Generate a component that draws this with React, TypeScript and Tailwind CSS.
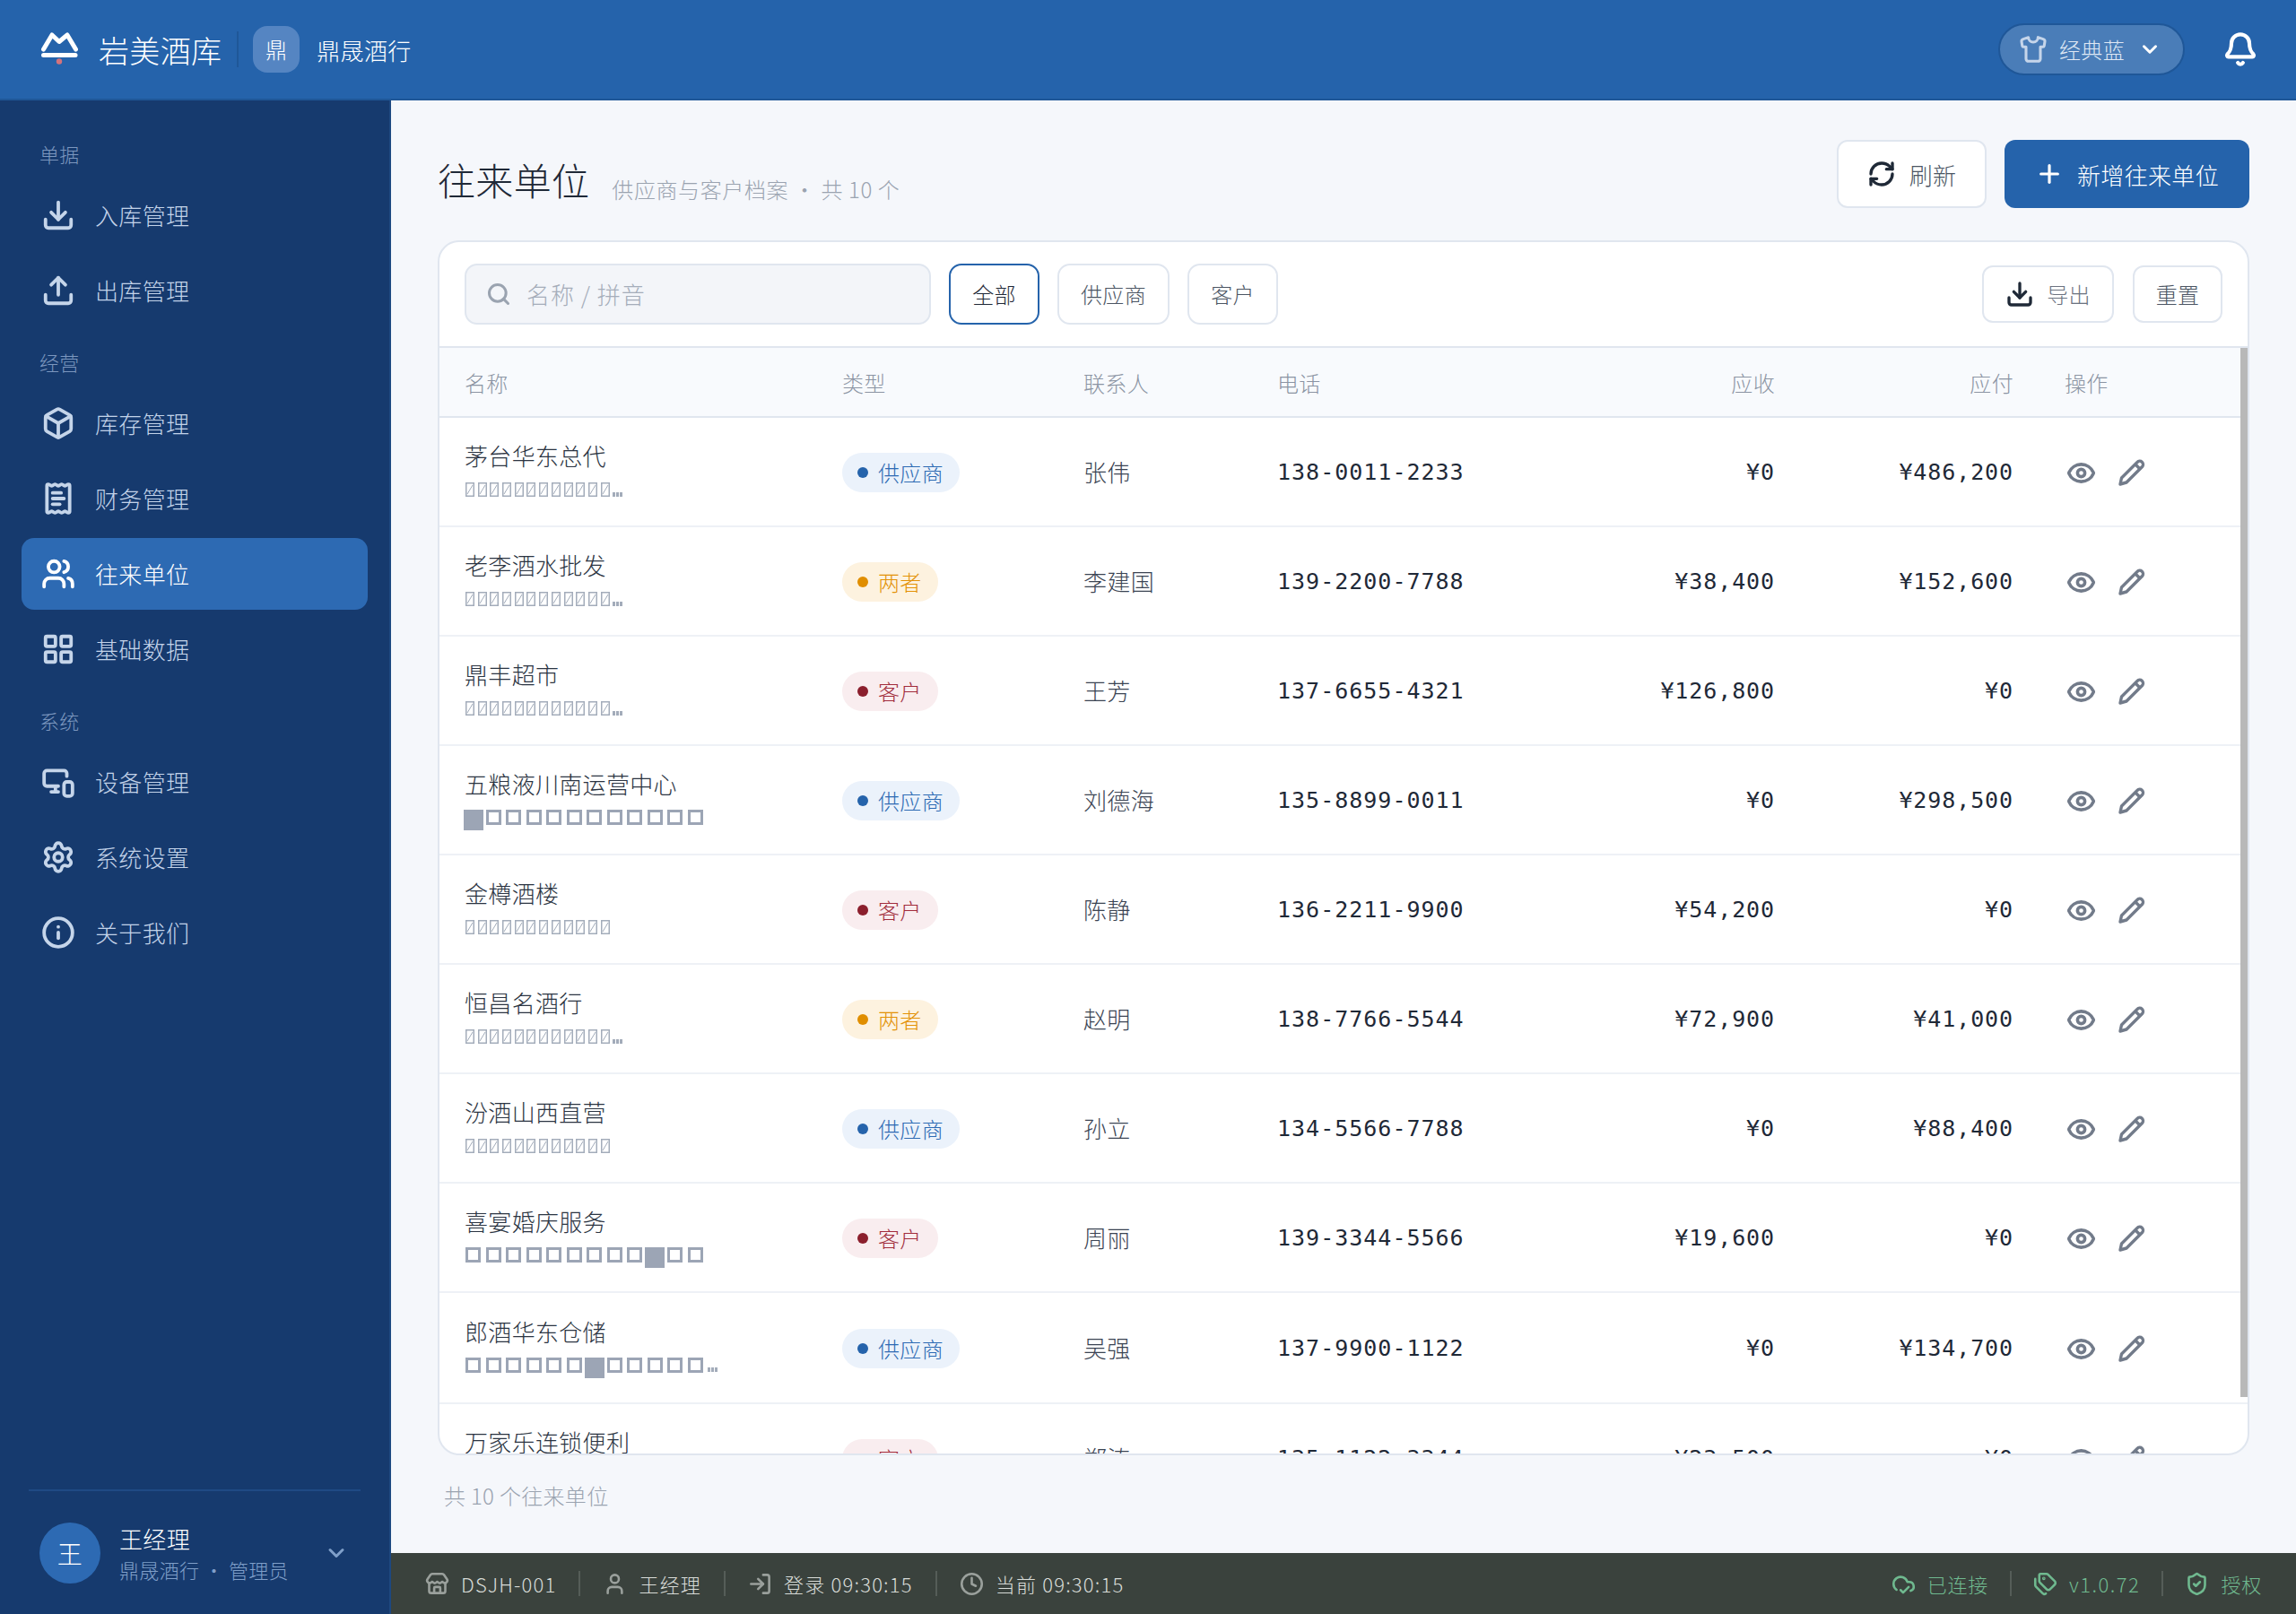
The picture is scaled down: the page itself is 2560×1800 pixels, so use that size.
import React from 'react';
import {
  Bell, Box, ChevronDown, Clock, CloudCheck, Download, Eye, Info, LayoutGrid, LogIn, MonitorSmartphone, Plus,
  ReceiptText, RefreshCw, Search, Settings, ShieldCheck, Shirt, Store, Tags, Upload, User, Users,
} from 'lucide-react';

type Kind = 'supplier' | 'customer' | 'both';
type Tofu = 'narrow' | 'narrowMore' | number[];

const navGroups = [
  {
    label: '单据',
    items: [
      { name: '入库管理', icon: Download },
      { name: '出库管理', icon: Upload },
    ],
  },
  {
    label: '经营',
    items: [
      { name: '库存管理', icon: Box },
      { name: '财务管理', icon: ReceiptText },
      { name: '往来单位', icon: Users, active: true },
      { name: '基础数据', icon: LayoutGrid },
    ],
  },
  {
    label: '系统',
    items: [
      { name: '设备管理', icon: MonitorSmartphone },
      { name: '系统设置', icon: Settings },
      { name: '关于我们', icon: Info },
    ],
  },
];

const partners: { name: string; tofu: Tofu; kind: Kind; contact: string; phone: string; ar: string; ap: string; tall?: boolean }[] = [
  { name: '茅台华东总代', tofu: 'narrowMore', kind: 'supplier', contact: '张伟', phone: '138-0011-2233', ar: '¥0', ap: '¥486,200' },
  { name: '老李酒水批发', tofu: 'narrowMore', kind: 'both', contact: '李建国', phone: '139-2200-7788', ar: '¥38,400', ap: '¥152,600' },
  { name: '鼎丰超市', tofu: 'narrowMore', kind: 'customer', contact: '王芳', phone: '137-6655-4321', ar: '¥126,800', ap: '¥0' },
  { name: '五粮液川南运营中心', tofu: [1, 0, 0, 0, 0, 0, 0, 0, 0, 0, 0, 0], kind: 'supplier', contact: '刘德海', phone: '135-8899-0011', ar: '¥0', ap: '¥298,500' },
  { name: '金樽酒楼', tofu: 'narrow', kind: 'customer', contact: '陈静', phone: '136-2211-9900', ar: '¥54,200', ap: '¥0' },
  { name: '恒昌名酒行', tofu: 'narrowMore', kind: 'both', contact: '赵明', phone: '138-7766-5544', ar: '¥72,900', ap: '¥41,000' },
  { name: '汾酒山西直营', tofu: 'narrow', kind: 'supplier', contact: '孙立', phone: '134-5566-7788', ar: '¥0', ap: '¥88,400' },
  { name: '喜宴婚庆服务', tofu: [0, 0, 0, 0, 0, 0, 0, 0, 0, 1, 0, 0], kind: 'customer', contact: '周丽', phone: '139-3344-5566', ar: '¥19,600', ap: '¥0' },
  { name: '郎酒华东仓储', tofu: [0, 0, 0, 0, 0, 0, 1, 0, 0, 0, 0, 0, 2], kind: 'supplier', contact: '吴强', phone: '137-9900-1122', ar: '¥0', ap: '¥134,700', tall: true },
  { name: '万家乐连锁便利', tofu: 'narrow', kind: 'customer', contact: '郑涛', phone: '135-1122-3344', ar: '¥23,500', ap: '¥0' },
];

const kindStyles: Record<Kind, { label: string; pill: string; dot: string }> = {
  supplier: { label: '供应商', pill: 'bg-[#ebf2fb] text-[#2d6ab3]', dot: 'bg-[#2563ab]' },
  customer: { label: '客户', pill: 'bg-[#f9edef] text-[#a12c3c]', dot: 'bg-[#8b1f2d]' },
  both: { label: '两者', pill: 'bg-[#fdf2df] text-[#e39208]', dot: 'bg-[#e08e00]' },
};

const rowGrid = 'grid grid-cols-[421px_269px_216px_240px_315px_266px_1fr] pl-[28px]';

function PencilIcon() {
  return (
    <svg width="30" height="30" viewBox="0 0 30 30" fill="none" stroke="currentColor" strokeWidth="3.4" strokeLinejoin="round">
      <path d="M2 28L3.5 21L21 3.5A3.5 3.5 0 0 1 26.5 8.5L9 26Z" />
      <path d="M19 6L24 11" />
    </svg>
  );
}

function Dots() {
  return (
    <span className="flex items-end gap-[1.5px] h-[16px] shrink-0">
      <span className="w-[2.5px] h-[5px] bg-[#a3acba]" />
      <span className="w-[2.5px] h-[5px] bg-[#a3acba]" />
      <span className="w-[2.5px] h-[5px] bg-[#a3acba]" />
    </span>
  );
}

// Missing-glyph boxes that the subtitle line shows in place of its text
function TofuLine({ tofu }: { tofu: Tofu }) {
  if (typeof tofu === 'string') {
    return (
      <div className="flex items-center h-[16px] gap-[3.7px] mt-[3px] ml-[1px]">
        {Array.from({ length: 12 }).map((_, i) => (
          <svg key={i} width="10" height="16" viewBox="0 0 10 16" className="text-[#a3acba] shrink-0">
            <rect x="0.75" y="0.75" width="8.5" height="14.5" fill="none" stroke="currentColor" strokeWidth="1.5" />
            <path d="M2 13L8 3" stroke="currentColor" strokeWidth="1" />
          </svg>
        ))}
        {tofu === 'narrowMore' && <Dots />}
      </div>
    );
  }
  return (
    <div className="flex items-start h-[16px] gap-[5.5px] -mt-[1px] ml-[1px]">
      {tofu.map((t, i) =>
        t === 2 ? (
          <Dots key={i} />
        ) : t === 1 ? (
          <span key={i} className="w-[22px] h-[23px] bg-[#9ca5b5] shrink-0 mx-[-2.5px]" />
        ) : (
          <span key={i} className="w-[17px] h-[17px] border-[3px] border-[#9ca5b5] shrink-0" />
        ),
      )}
    </div>
  );
}

function Sidebar() {
  return (
    <aside className="w-[436px] shrink-0 bg-[#163a6e] border-r-2 border-[#1d4880] flex flex-col">
      <nav className="flex-1 pt-[44px] px-[24px] flex flex-col gap-[24px]">
        {navGroups.map((group) => (
          <div key={group.label}>
            <div className="h-[32px] pl-[20px] mb-[12px] text-[22px] leading-[30px] text-[#7c97bf]">{group.label}</div>
            <div className="flex flex-col gap-[4px]">
              {group.items.map((item) => {
                const Icon = item.icon;
                return (
                  <div
                    key={item.name}
                    className={`h-[80px] flex items-center pl-[22px] gap-[22px] rounded-[14px] text-[26px] ${
                      item.active ? 'bg-[#2d6ab3] text-white' : 'text-[#c3d3e9]'
                    }`}
                  >
                    <Icon size={38} strokeWidth={2.4} className={item.active ? 'text-white' : 'text-[#c5d5ea]'} />
                    <span className="pb-[2px]">{item.name}</span>
                  </div>
                );
              })}
            </div>
          </div>
        ))}
      </nav>
      <div className="mx-[32px] border-t-2 border-[#1f4a84] h-[139px] pl-[12px] pr-[13px] flex items-center">
        <div className="w-[68px] h-[68px] rounded-full bg-[#2d6ab3] flex items-center justify-center text-white text-[28px]">王</div>
        <div className="ml-[21px] flex-1">
          <div className="text-[26px] leading-[36px] text-white">王经理</div>
          <div className="text-[22px] leading-[32px] text-[#7f9fc9]">鼎晟酒行 · 管理员</div>
        </div>
        <ChevronDown size={28} strokeWidth={2.6} className="text-[#7f9fc9]" />
      </div>
    </aside>
  );
}

function TopBar() {
  return (
    <header className="h-[112px] shrink-0 bg-[#2563ab] border-b-2 border-[#1f5798] flex items-center pl-[45px] pr-[42px] text-white">
      <svg width="42" height="40" viewBox="0 0 42 40" fill="none">
        <path d="M3.5 20L13 4L21 11.5L30 4L39.5 20" stroke="white" strokeWidth="5" strokeLinecap="round" strokeLinejoin="round" />
        <path d="M3.5 26.5H39" stroke="white" strokeWidth="5" strokeLinecap="round" />
        <circle cx="21" cy="33.5" r="3.2" fill="#d4737c" />
      </svg>
      <span className="ml-[23px] text-[34px]">岩美酒库</span>
      <span className="ml-[17px] w-[2px] h-[40px] bg-[#1f5798]" />
      <span className="ml-[16px] w-[52px] h-[52px] rounded-[16px] bg-[#5585c2] flex items-center justify-center text-[24px]">鼎</span>
      <span className="ml-[19px] text-[26px]">鼎晟酒行</span>
      <div className="ml-auto w-[208px] h-[58px] rounded-full bg-[#4a7db8] border-2 border-[#1f5798] flex items-center pl-[21px] text-[24px] text-[#dfe8f4]">
        <Shirt size={32} strokeWidth={2.3} className="text-[#c5d5ea]" />
        <span className="ml-[13px]">经典蓝</span>
        <ChevronDown size={26} strokeWidth={2.8} className="ml-[15px] text-white" />
      </div>
      <Bell size={40} strokeWidth={2.5} className="ml-[42px]" />
    </header>
  );
}

function PartnerRow({ p }: { p: (typeof partners)[number] }) {
  const kind = kindStyles[p.kind];
  const numbers = "font-['DejaVu_Sans_Mono',monospace] font-normal text-[25px] text-[#1f2937]";
  return (
    <div className={`${rowGrid} ${p.tall ? 'h-[124px]' : 'h-[122px]'} pt-[2px] items-center border-b-2 border-[#eef1f6]`}>
      <div className="pb-[4px]">
        <div className="text-[26px] leading-[36px] text-[#2b3442]">{p.name}</div>
        <div className="mt-[12px] h-[23px]"><TofuLine tofu={p.tofu} /></div>
      </div>
      <div>
        <span className={`inline-flex h-[44px] items-center rounded-full pl-[17px] pr-[18px] text-[24px] ${kind.pill}`}>
          <span className={`w-[12px] h-[12px] rounded-full mr-[11px] ${kind.dot}`} />
          {kind.label}
        </span>
      </div>
      <div className="pb-[3px] text-[26px] text-[#3b4453]">{p.contact}</div>
      <div className={`${numbers} tracking-[1px]`}>{p.phone}</div>
      <div className={`${numbers} text-right tracking-[0.9px]`}>{p.ar}</div>
      <div className={`${numbers} text-right tracking-[0.9px]`}>{p.ap}</div>
      <div className="pl-[59px] flex items-center gap-[25px] text-[#727b8a]">
        <Eye size={33} strokeWidth={2.6} />
        <PencilIcon />
      </div>
    </div>
  );
}

function StatusItem({ icon: Icon, text, tone, wide }: { icon: React.ElementType; text: string; tone: 'left' | 'right'; wide?: boolean }) {
  return (
    <div className="flex items-center gap-[13px]">
      <Icon size={27} strokeWidth={2.3} className={tone === 'left' ? 'text-[#9aa09c]' : 'text-[#6fb98f]'} />
      <span className={wide ? 'tracking-[1.5px]' : undefined}>{text}</span>
    </div>
  );
}

function StatusBar() {
  const sep = <span className="w-[2px] h-[28px] bg-[#555d58] mx-[25px]" />;
  const sepRight = <span className="w-[2px] h-[28px] bg-[#555d58] mx-[24px]" />;
  return (
    <footer className="h-[68px] shrink-0 bg-[#3a423d] flex items-center pl-[38px] pr-[38px] text-[22px] tracking-[1.2px] text-[#d8dcd8]">
      <StatusItem icon={Store} text="DSJH-001" tone="left" />
      {sep}
      <StatusItem icon={User} text="王经理" tone="left" />
      {sep}
      <StatusItem icon={LogIn} text="登录 09:30:15" tone="left" />
      {sep}
      <StatusItem icon={Clock} text="当前 09:30:15" tone="left" />
      <div className="ml-auto flex items-center text-[#6fb98f] tracking-[0.8px]">
        <StatusItem icon={CloudCheck} text="已连接" tone="right" />
        {sepRight}
        <StatusItem icon={Tags} text="v1.0.72" tone="right" wide />
        {sepRight}
        <StatusItem icon={ShieldCheck} text="授权" tone="right" />
      </div>
    </footer>
  );
}

export default function App() {
  return (
    <div className="w-[2560px] h-[1800px] flex flex-col overflow-hidden bg-[#f5f7fb] font-['Noto_Sans_CJK_SC','Noto_Sans',sans-serif] font-light tracking-[0.02em]">
      <TopBar />
      <div className="flex-1 min-h-0 flex">
        <Sidebar />
        <div className="flex-1 min-w-0 flex flex-col">
          <main className="flex-1 min-h-0 flex flex-col pt-[44px] pl-[52px] pr-[52px]">
            <div className="h-[76px] shrink-0 flex items-center">
              <h1 className="mt-[10px] text-[42px] font-light text-[#1f2937]">往来单位</h1>
              <span className="ml-[25px] mt-[33px] text-[24px] tracking-[0.6px] text-[#9aa3b0]">供应商与客户档案 · 共 10 个</span>
              <button className="ml-auto w-[167px] h-[76px] rounded-[12px] bg-white border-2 border-[#e0e6ef] flex items-center justify-center gap-[15px] text-[26px] text-[#4b5563]">
                <RefreshCw size={32} strokeWidth={2.5} className="text-[#1f2937]" />
                刷新
              </button>
              <button className="ml-[20px] w-[273px] h-[76px] rounded-[12px] bg-[#2563ab] flex items-center justify-center gap-[15px] text-[26px] text-white">
                <Plus size={32} strokeWidth={2.4} />
                新增往来单位
              </button>
            </div>

            <section className="relative mt-[36px] flex-1 min-h-0 rounded-[24px] bg-white border-2 border-[#e0e6ef] overflow-hidden">
              <div className="h-[118px] border-b-2 border-[#e0e6ef] flex items-center pl-[28px] pr-[28px] text-[24px]">
                <div className="w-[520px] h-[68px] rounded-[14px] bg-[#f3f5f9] border-2 border-[#e0e6ef] flex items-center pl-[22px] gap-[17px] text-[26px] text-[#a5adba]">
                  <Search size={28} strokeWidth={2.6} className="text-[#9aa3b0]" />
                  <span className="pb-[2px] tracking-[1px]">名称 / 拼音</span>
                </div>
                <button className="ml-[20px] w-[101px] h-[68px] rounded-[14px] bg-white border-2 border-[#2563ab] text-[#1f2937]">全部</button>
                <button className="ml-[20px] w-[125px] h-[68px] rounded-[14px] bg-white border-2 border-[#e0e6ef] text-[#4b5563]">供应商</button>
                <button className="ml-[20px] w-[101px] h-[68px] rounded-[14px] bg-white border-2 border-[#e0e6ef] text-[#4b5563]">客户</button>
                <button className="ml-auto w-[147px] h-[64px] rounded-[12px] bg-white border-2 border-[#e0e6ef] flex items-center justify-center gap-[14px] text-[#6b7280]">
                  <Download size={32} strokeWidth={2.5} className="text-[#1f2937]" />
                  导出
                </button>
                <button className="ml-[21px] w-[100px] h-[64px] rounded-[12px] bg-white border-2 border-[#e0e6ef] text-[#4b5563]">重置</button>
              </div>

              <div className={`${rowGrid} h-[78px] pt-[2px] items-center bg-[#f8fafd] border-b-2 border-[#e0e6ef] text-[24px] text-[#8b94a3]`}>
                <div>名称</div>
                <div>类型</div>
                <div>联系人</div>
                <div>电话</div>
                <div className="text-right">应收</div>
                <div className="text-right">应付</div>
                <div className="pl-[57px]">操作</div>
              </div>

              {partners.map((p) => (
                <PartnerRow key={p.name} p={p} />
              ))}

              <div className="absolute right-0 top-[118px] w-[8px] h-[1170px] bg-[#b8b8b8]" />
            </section>

            <div className="h-[109px] shrink-0 pt-[27px] pl-[7px] text-[24px] text-[#9aa3b0]">共 10 个往来单位</div>
          </main>
          <StatusBar />
        </div>
      </div>
    </div>
  );
}
